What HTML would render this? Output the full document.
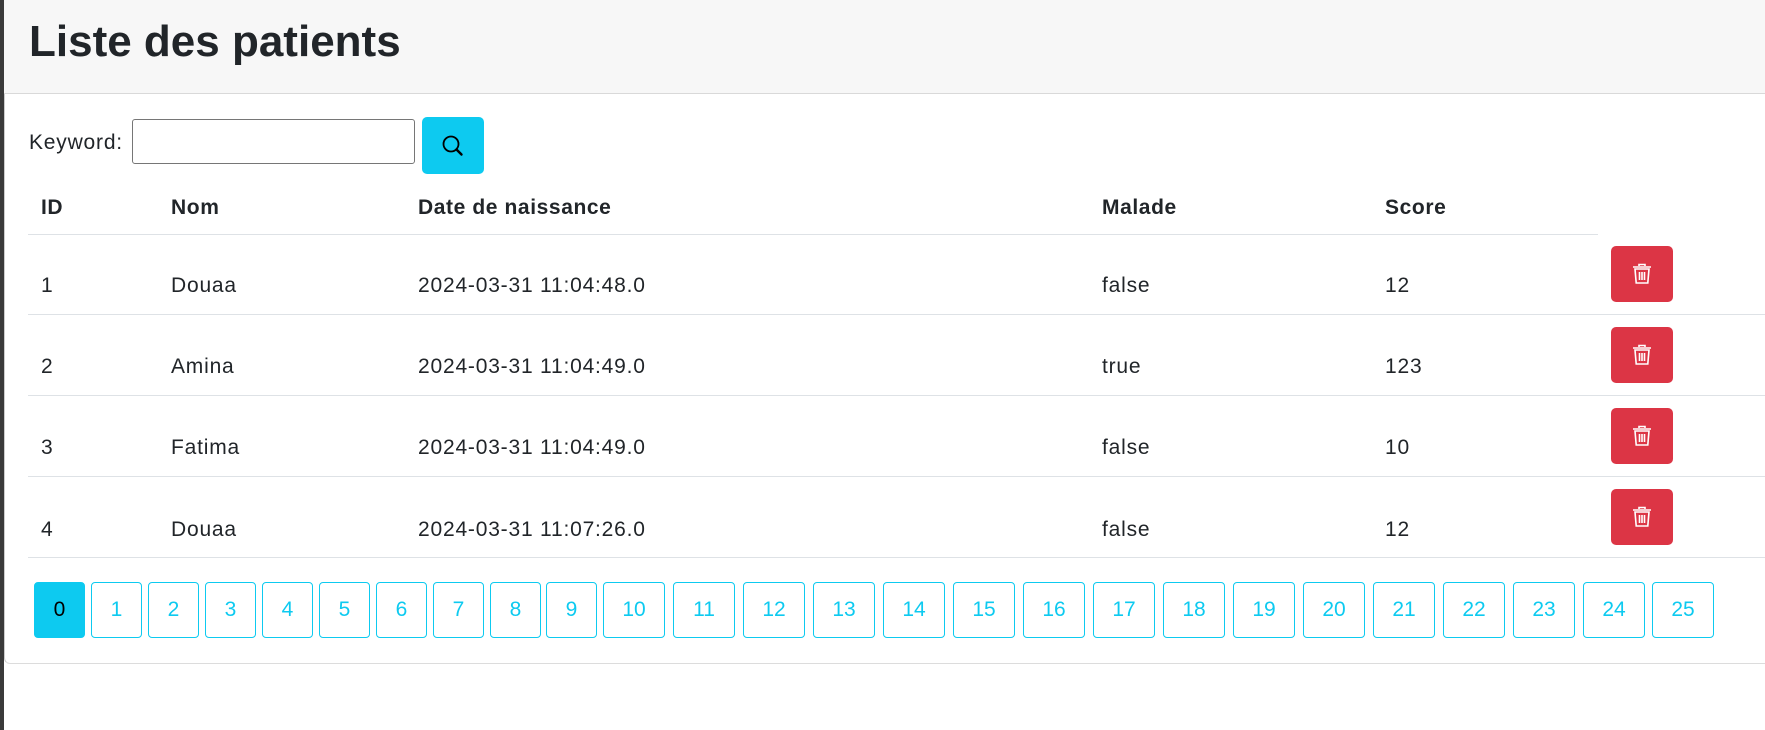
<!DOCTYPE html>
<html><head><meta charset="utf-8"><style>
*{box-sizing:border-box;margin:0;padding:0}
body{width:1765px;height:730px;background:#fff;font-family:"Liberation Sans","DejaVu Sans",sans-serif;color:#212529;position:relative;overflow:hidden;font-size:21px;letter-spacing:.8px}
.edge{position:absolute;left:0;top:0;width:4px;height:730px;background:#3a3a3a}
.card{position:absolute;left:4px;top:0;right:0;height:664px;border-bottom:1px solid #dcdcdc;border-left:1px solid #ccc;border-radius:0 0 0 6px}
.hdr{position:absolute;left:4px;top:0;right:0;height:94px;background:#f7f7f7;border-bottom:1px solid #d9d9d9}
h1{position:absolute;left:29px;top:16px;font-size:44px;font-weight:bold;line-height:1.2;letter-spacing:0}
.abs{position:absolute}
.lbl{left:29px;top:131px}
.inp{left:132px;top:119px;width:283px;height:45px;border:1px solid #767676;border-radius:3px}
.sb{left:422px;top:117px;width:62px;height:57px;background:#0dcaf0;border-radius:5px}
.th{top:196px;font-weight:bold;letter-spacing:.6px}
.line{position:absolute;height:1px;background:#dee2e6}
.del{position:absolute;left:1611px;width:62px;height:56px;background:#dc3545;border-radius:5px}
.del svg{position:absolute;left:21px;top:17px}
.pg{position:absolute;top:582px;height:56px;border:1px solid #0dcaf0;border-radius:4px;color:#0dcaf0;text-align:center;line-height:54px;font-size:21px;letter-spacing:0}
.pg.a{background:#0dcaf0;color:#000}
</style></head><body>
<div class="card"></div>
<div class="hdr"></div>
<div class="edge"></div>
<h1>Liste des patients</h1>
<div class="abs lbl">Keyword:</div>
<div class="abs inp"></div>
<div class="abs sb"><svg width="62" height="57" viewBox="0 0 62 57"><circle cx="29" cy="27" r="7.5" fill="none" stroke="#000" stroke-width="1.8"/><path d="M34.5 32.5l5 5" stroke="#000" stroke-width="2.4" stroke-linecap="round"/></svg></div>
<div class="abs th" style="left:41px">ID</div>
<div class="abs th" style="left:171px">Nom</div>
<div class="abs th" style="left:418px">Date de naissance</div>
<div class="abs th" style="left:1102px">Malade</div>
<div class="abs th" style="left:1385px">Score</div>
<div class="line" style="left:28px;width:1570px;top:234px"></div>
<div class="line" style="left:28px;right:0;top:314px"></div>
<div class="line" style="left:28px;right:0;top:395px"></div>
<div class="line" style="left:28px;right:0;top:476px"></div>
<div class="line" style="left:28px;right:0;top:557px"></div>

<div class="abs" style="left:41px;top:274px">1</div><div class="abs" style="left:171px;top:274px">Douaa</div><div class="abs" style="left:418px;top:274px">2024-03-31 11:04:48.0</div><div class="abs" style="left:1102px;top:274px">false</div><div class="abs" style="left:1385px;top:274px">12</div>
<div class="abs" style="left:41px;top:355px">2</div><div class="abs" style="left:171px;top:355px">Amina</div><div class="abs" style="left:418px;top:355px">2024-03-31 11:04:49.0</div><div class="abs" style="left:1102px;top:355px">true</div><div class="abs" style="left:1385px;top:355px">123</div>
<div class="abs" style="left:41px;top:436px">3</div><div class="abs" style="left:171px;top:436px">Fatima</div><div class="abs" style="left:418px;top:436px">2024-03-31 11:04:49.0</div><div class="abs" style="left:1102px;top:436px">false</div><div class="abs" style="left:1385px;top:436px">10</div>
<div class="abs" style="left:41px;top:518px">4</div><div class="abs" style="left:171px;top:518px">Douaa</div><div class="abs" style="left:418px;top:518px">2024-03-31 11:07:26.0</div><div class="abs" style="left:1102px;top:518px">false</div><div class="abs" style="left:1385px;top:518px">12</div>

<div class="del" style="top:246px"><svg width="20" height="22" viewBox="0 0 20 22"><path d="M7 3V1.5h6V3M1 4h18M3 6h14l-1.2 14H4.2z M7.5 9v8M10 9v8M12.5 9v8" fill="none" stroke="#fff" stroke-width="1.6"/></svg></div>
<div class="del" style="top:327px"><svg width="20" height="22" viewBox="0 0 20 22"><path d="M7 3V1.5h6V3M1 4h18M3 6h14l-1.2 14H4.2z M7.5 9v8M10 9v8M12.5 9v8" fill="none" stroke="#fff" stroke-width="1.6"/></svg></div>
<div class="del" style="top:408px"><svg width="20" height="22" viewBox="0 0 20 22"><path d="M7 3V1.5h6V3M1 4h18M3 6h14l-1.2 14H4.2z M7.5 9v8M10 9v8M12.5 9v8" fill="none" stroke="#fff" stroke-width="1.6"/></svg></div>
<div class="del" style="top:489px"><svg width="20" height="22" viewBox="0 0 20 22"><path d="M7 3V1.5h6V3M1 4h18M3 6h14l-1.2 14H4.2z M7.5 9v8M10 9v8M12.5 9v8" fill="none" stroke="#fff" stroke-width="1.6"/></svg></div>

<div class="pg a" style="left:34px;width:51px">0</div>
<div class="pg" style="left:91px;width:51px">1</div>
<div class="pg" style="left:148px;width:51px">2</div>
<div class="pg" style="left:205px;width:51px">3</div>
<div class="pg" style="left:262px;width:51px">4</div>
<div class="pg" style="left:319px;width:51px">5</div>
<div class="pg" style="left:376px;width:51px">6</div>
<div class="pg" style="left:433px;width:51px">7</div>
<div class="pg" style="left:490px;width:51px">8</div>
<div class="pg" style="left:546px;width:51px">9</div>
<div class="pg" style="left:603px;width:62px">10</div>
<div class="pg" style="left:673px;width:62px">11</div>
<div class="pg" style="left:743px;width:62px">12</div>
<div class="pg" style="left:813px;width:62px">13</div>
<div class="pg" style="left:883px;width:62px">14</div>
<div class="pg" style="left:953px;width:62px">15</div>
<div class="pg" style="left:1023px;width:62px">16</div>
<div class="pg" style="left:1093px;width:62px">17</div>
<div class="pg" style="left:1163px;width:62px">18</div>
<div class="pg" style="left:1233px;width:62px">19</div>
<div class="pg" style="left:1303px;width:62px">20</div>
<div class="pg" style="left:1373px;width:62px">21</div>
<div class="pg" style="left:1443px;width:62px">22</div>
<div class="pg" style="left:1513px;width:62px">23</div>
<div class="pg" style="left:1583px;width:62px">24</div>
<div class="pg" style="left:1652px;width:62px">25</div>
</body></html>
